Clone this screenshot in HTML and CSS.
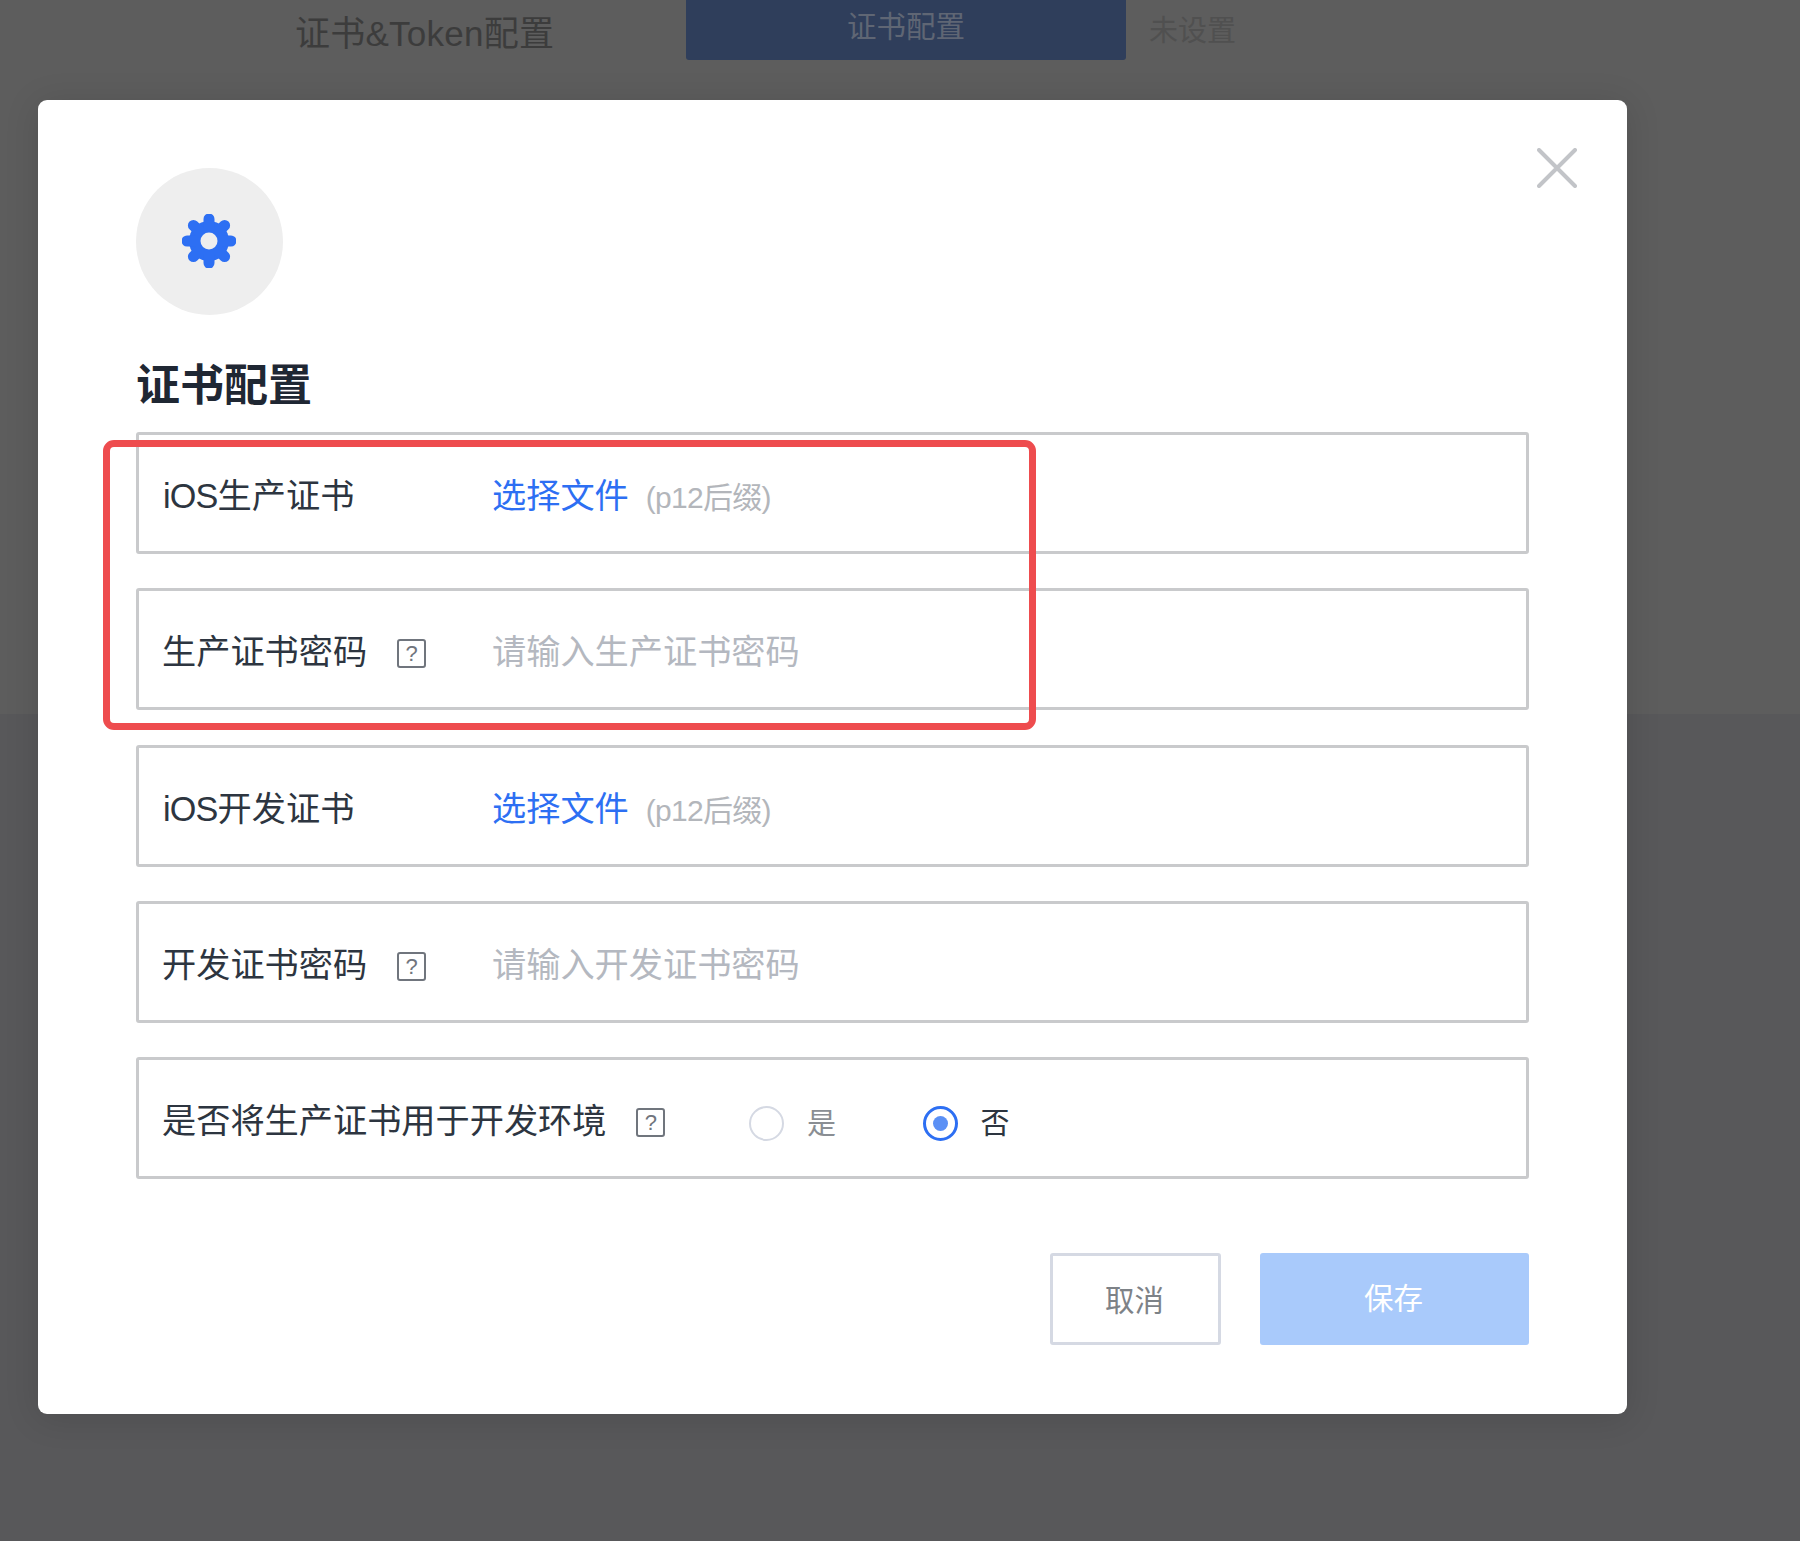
FILE: index.html
```html
<!DOCTYPE html>
<html lang="zh-CN">
<head>
<meta charset="utf-8">
<title>证书配置</title>
<link rel="stylesheet" href="styles.css">
</head>
<body>
<div class="page">
  <div class="backdrop-top">
    <div class="bg-title">证书&amp;Token配置</div>
    <div class="bg-tab">证书配置</div>
    <div class="bg-status">未设置</div>
  </div>
  <div class="backdrop-bottom"></div>

  <section class="modal">
    <svg class="close" viewBox="0 0 40 40" aria-hidden="true"><path d="M2 2 38 38M38 2 2 38"/></svg>
    <div class="icon-circle">
      <svg class="gear" viewBox="0 0 54 54" aria-hidden="true">
        <circle class="gear-body" cx="27" cy="27" r="20"/>
        <path class="gear-teeth" d="M27 5V49M5 27H49M11.4 11.4 42.6 42.6M42.6 11.4 11.4 42.6"/>
        <circle class="gear-hole" cx="27" cy="27" r="8.5"/>
      </svg>
    </div>
    <h2 class="modal-title">证书配置</h2>
    <div class="form">
      <div class="row">
        <div class="label"><span class="latin">iOS</span>生产证书</div>
        <span class="link">选择文件</span><span class="hint">(p12后缀)</span>
      </div>
      <div class="row">
        <div class="label">生产证书密码<span class="help">?</span></div>
        <span class="placeholder">请输入生产证书密码</span>
      </div>
      <div class="row">
        <div class="label"><span class="latin">iOS</span>开发证书</div>
        <span class="link">选择文件</span><span class="hint">(p12后缀)</span>
      </div>
      <div class="row">
        <div class="label">开发证书密码<span class="help">?</span></div>
        <span class="placeholder">请输入开发证书密码</span>
      </div>
      <div class="row">
        <div class="label label-wide">是否将生产证书用于开发环境<span class="help">?</span></div>
        <div class="radio-option radio-off"><span class="radio"></span><span class="radio-text">是</span></div>
        <div class="radio-option"><span class="radio radio-on"></span><span class="radio-text">否</span></div>
      </div>
    </div>
    <div class="actions">
      <div class="btn btn-cancel">取消</div>
      <div class="btn btn-save">保存</div>
    </div>
  </section>

  <div class="annotation"></div>
</div>
</body>
</html>
```
FILE: styles.css
```css
* { box-sizing: border-box; }
html, body { margin: 0; padding: 0; }
body {
  font-family: "Liberation Sans", "Noto Sans CJK SC", sans-serif;
  background: #58585a;
}
.page {
  position: relative;
  width: 1800px;
  height: 1541px;
  overflow: hidden;
}
.backdrop-top {
  height: 714px;
  background: #5d5d5d;
  display: flex;
  align-items: flex-start;
  padding-left: 295px;
}
.backdrop-bottom {
  height: 827px;
  background: #58585a;
}
.bg-title {
  width: 391px;
  font-size: 35px;
  line-height: 40px;
  letter-spacing: .25px;
  margin-top: 14px;
  color: #3c3c3c;
}
.bg-tab {
  width: 440px;
  height: 60px;
  background: #2f3e5b;
  border-radius: 0 0 3px 3px;
  color: #5f6674;
  font-size: 29.5px;
  line-height: 54px;
  text-align: center;
}
.bg-status {
  margin-left: 23px;
  margin-top: 12px;
  font-size: 29px;
  line-height: 38px;
  color: #505050;
}
.modal {
  position: absolute;
  left: 38px;
  top: 100px;
  width: 1589px;
  height: 1314px;
  padding: 68px 98px 0;
  background: #fff;
  border-radius: 9px;
  box-shadow: 0 4px 34px rgba(0, 0, 0, .13);
}
.close {
  position: absolute;
  left: 1499px;
  top: 48px;
  width: 40px;
  height: 40px;
  fill: none;
  stroke: #c2c4c8;
  stroke-width: 4;
  stroke-linecap: round;
}
.icon-circle {
  width: 147px;
  height: 147px;
  border-radius: 50%;
  background: #eeeeee;
  display: flex;
  align-items: center;
  justify-content: center;
}
.gear { width: 54px; height: 54px; display: block; margin: 0 2px 1px 0; }
.gear-body { fill: #2d6ff3; }
.gear-teeth { fill: none; stroke: #2d6ff3; stroke-width: 11; stroke-linecap: round; }
.gear-hole { fill: #eeeeee; }
.modal-title {
  margin: 41px 0 0;
  font-size: 44px;
  line-height: 60px;
  font-weight: 700;
  color: #1f2733;
}
.form {
  margin-top: 16px;
  display: flex;
  flex-direction: column;
  gap: 34.25px;
}
.row {
  height: 122px;
  border: 3px solid #c9cacc;
  border-radius: 3px;
  padding: 6px 0 0 23px;
  display: flex;
  align-items: center;
}
.label {
  width: 330px;
  display: flex;
  align-items: center;
  font-size: 34.2px;
  line-height: 44px;
  color: #2d3540;
}
.latin { letter-spacing: -.8px; margin-left: 1px; }
.label-wide { width: 587px; }
.help {
  width: 29px;
  height: 29px;
  margin-left: 30px;
  margin-top: 3px;
  border: 2px solid #70757d;
  border-radius: 3px;
  font-size: 22px;
  line-height: 25px;
  text-align: center;
  color: #70757d;
}
.link {
  font-size: 34.2px;
  line-height: 44px;
  color: #2d6ff3;
}
.hint {
  margin-left: 17px;
  margin-top: 4px;
  font-size: 30px;
  line-height: 44px;
  letter-spacing: -.7px;
  color: #b3b6bb;
}
.placeholder {
  font-size: 34.2px;
  line-height: 44px;
  color: #b4b8c0;
}
.radio-option {
  width: 173.5px;
  display: flex;
  align-items: center;
  gap: 23px;
  margin-top: 5px;
}
.radio {
  width: 35px;
  height: 35px;
  border: 2px solid #d5d9e3;
  border-radius: 50%;
  background: #fff;
  display: flex;
  align-items: center;
  justify-content: center;
}
.radio-on { border: 3px solid #2d6ff3; }
.radio-on::after {
  content: "";
  width: 15px;
  height: 15px;
  border-radius: 50%;
  background: #5b90f5;
}
.radio-text {
  font-size: 29px;
  line-height: 40px;
  color: #2d3540;
}
.radio-off .radio-text { color: #8a8e93; }
.actions {
  margin-top: 74px;
  display: flex;
  justify-content: flex-end;
  gap: 39px;
}
.btn {
  height: 92px;
  border-radius: 3px;
  font-size: 29.5px;
  display: flex;
  align-items: center;
  justify-content: center;
}
.btn-cancel {
  width: 171px;
  border: 3px solid #d5d9e3;
  color: #7d8287;
  padding: 0 2px 3px 0;
}
.btn-save {
  width: 269px;
  background: #a9cafb;
  color: #fff;
  padding: 0 2px 7px 0;
}
.annotation {
  position: absolute;
  left: 103px;
  top: 440px;
  width: 933px;
  height: 290px;
  border: 7px solid #ee4c4e;
  border-radius: 11px;
}
```
